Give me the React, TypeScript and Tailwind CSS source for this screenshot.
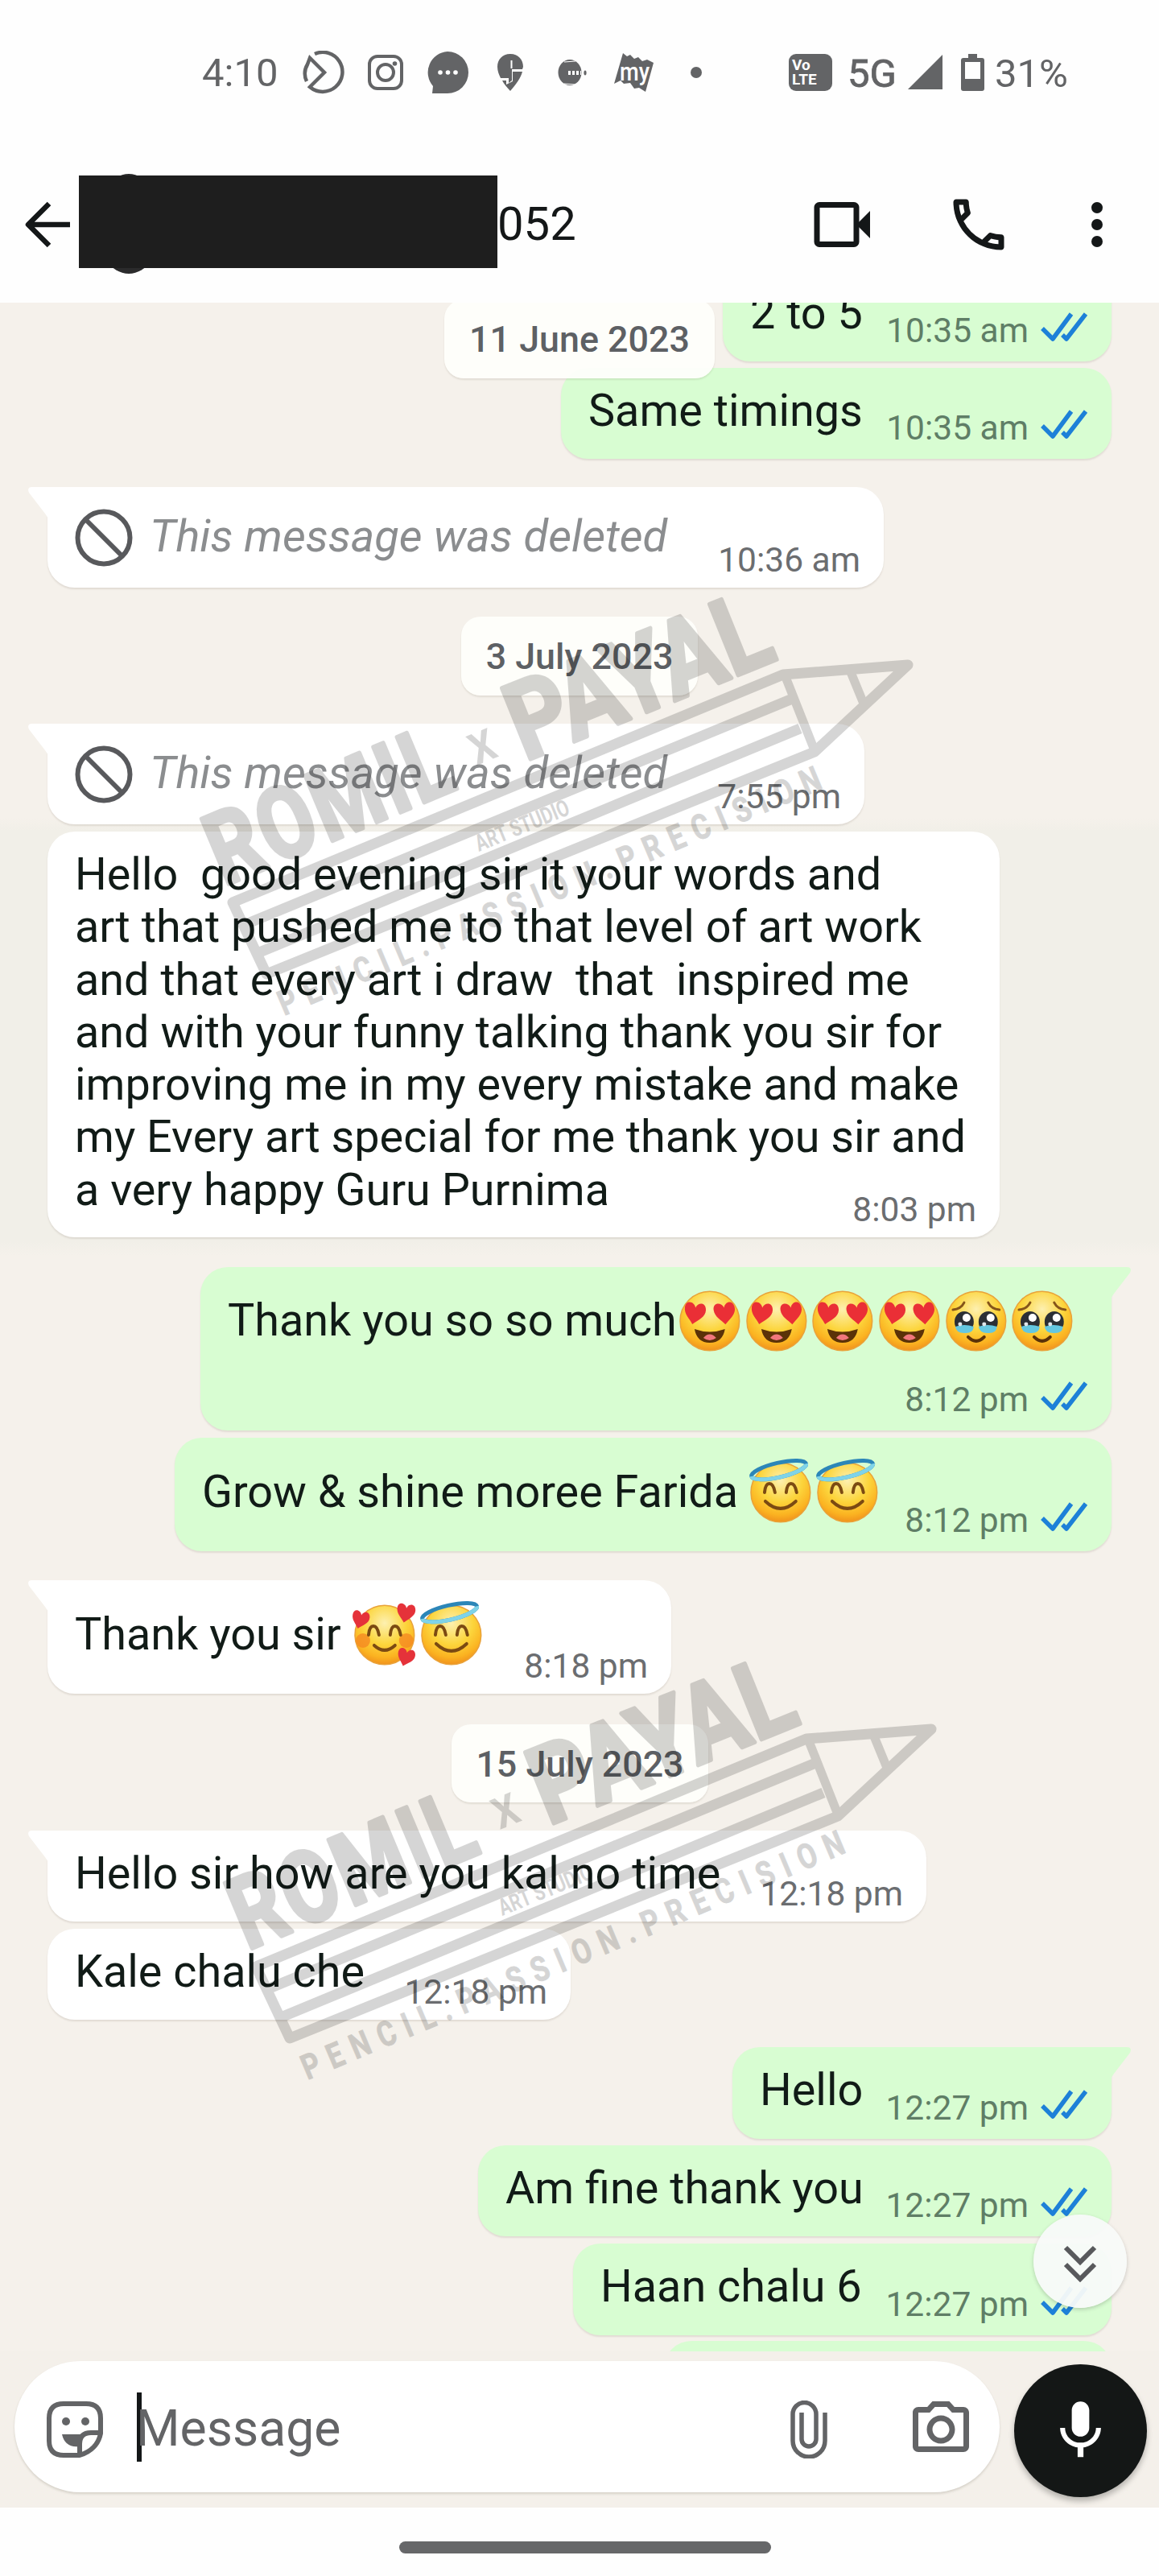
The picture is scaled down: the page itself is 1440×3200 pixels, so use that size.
import type { ReactNode } from 'react';
import clsx from 'clsx';
import { MdMic, MdOutlineCall, MdOutlinePhotoCamera } from 'react-icons/md';

/* ---------- Status bar ---------- */

function StatusBar() {
  return (
    <div className="flex h-[180px] items-center pl-[251px] text-[49px] leading-none text-[#636466]">
      <span className="mt-[1px] w-[124px]">4:10</span>
      <svg className="h-[54px] w-[53px] shrink-0" viewBox="0 0 53 54" fill="none" stroke="currentColor" strokeWidth="4.500">
        <path d="M16 4A24.500 24.500 0 1 1 10 45L28 27L10 9L7 17Q1 27 6 38" />
      </svg>
      <svg className="ml-[29px] h-[44px] w-[44px] shrink-0" viewBox="0 0 44 44" fill="none" stroke="currentColor" strokeWidth="4">
        <rect x="2" y="2" width="40" height="40" rx="10" />
        <circle cx="22" cy="22" r="10" />
        <circle cx="33.500" cy="11" r="2.800" fill="currentColor" stroke="none" />
      </svg>
      <svg className="ml-[29px] h-[54px] w-[53px] shrink-0" viewBox="0 0 53 54">
        <path d="M26 1a26 26 0 1 1 0 52H7l1-9A26 26 0 0 1 26 1z" fill="currentColor" />
        <circle cx="17" cy="27" r="2.800" fill="white" />
        <circle cx="26.500" cy="27" r="2.800" fill="white" />
        <circle cx="36" cy="27" r="2.800" fill="white" />
      </svg>
      <svg className="ml-[34px] h-[48px] w-[33px] shrink-0" viewBox="0 0 33 48">
        <path d="M17 1C7 1 1 8 1 17c0 5 2 10 4 14h10v6l4-3V20h13l1-3C33 8 27 1 17 1z" fill="currentColor" />
        <path d="M7 34h5v5l8-4V23h12c-2 8-8 16-15 24-4-4-8-9-10-13z" fill="currentColor" />
        <path d="M18.500 9v10" stroke="white" strokeWidth="2" />
      </svg>
      <svg className="ml-[43px] h-[36px] w-[36px] shrink-0" viewBox="0 0 36 36">
        <ellipse cx="15" cy="18" rx="14.500" ry="16" fill="currentColor" />
        <path d="M13 18.500h16" stroke="white" strokeWidth="5" strokeDasharray="3 2" />
        <path d="M8 5l14-1M8 32l14 1" stroke="white" strokeWidth="1.200" />
        <ellipse cx="34" cy="18.500" rx="1.600" ry="3" fill="currentColor" />
      </svg>
      <svg className="ml-[33px] h-[50px] w-[52px] shrink-0" viewBox="0 0 52 50">
        <path d="M12 1l5 4 4-2 5 5 5-2 5 5 6-2 8 4-10 36-8-5-6 1-5-7-8 1-4-4-8 4z" fill="currentColor" />
        <text x="8" y="35" fontSize="32" fontWeight="500" fill="white" textLength="37" lengthAdjust="spacingAndGlyphs">
          my
        </text>
      </svg>
      <span className="ml-[44px] h-[14px] w-[14px] shrink-0 rounded-full bg-current" />

      <span className="ml-[108px] flex h-[46px] w-[54px] shrink-0 flex-col justify-center rounded-[9px] bg-current pl-[4px]">
        <span className="text-[19px] font-bold leading-[18px] text-white">Vo</span>
        <span className="text-[19px] font-bold leading-[18px] text-white">LTE</span>
      </span>
      <span className="ml-[19px] mt-[2px] w-[75px] [-webkit-text-stroke:0.8px_#636466]">5G</span>
      <svg className="h-[44px] w-[44px] shrink-0" viewBox="0 0 44 44">
        <path d="M43 0v43H0z" fill="currentColor" />
      </svg>
      <svg className="ml-[22px] h-[46px] w-[29px] shrink-0" viewBox="0 0 29 46">
        <path d="M9 0h11v5h6q3 0 3 3v35q0 3-3 3H3q-3 0-3-3V8q0-3 3-3h6zM5 10v21h19V10z" fill="currentColor" fillRule="evenodd" />
      </svg>
      <span className="ml-[13px] mt-[2px]">31%</span>
    </div>
  );
}

/* ---------- Chat header ---------- */

function ChatHeader() {
  return (
    <div className="flex h-[196px] items-start pt-[38px]">
      <svg className="ml-[29px] mt-[31px] h-[60px] w-[59px] shrink-0" viewBox="0 0 59 60" fill="none" stroke="#141718" strokeWidth="6.500">
        <path d="M58 30H6M32 4L6 30l26 26" strokeLinejoin="round" />
      </svg>
      <div className="relative ml-[10px] h-[115px] w-[520px] shrink-0">
        <span className="absolute left-[20px] top-[-2px] h-[124px] w-[84px] rounded-[50%] bg-[#2b2b2c]" />
        <span className="absolute inset-0 bg-[#1e1e1e]" />
      </div>
      <span className="w-[392px] pt-[27px] text-[58px] leading-[66px] text-[#141718]">052</span>
      <svg className="mt-[31px] h-[60px] w-[74px] shrink-0" viewBox="0 0 74 60">
        <rect x="5" y="5.500" width="49" height="49" rx="3" fill="none" stroke="#141718" strokeWidth="7" />
        <path d="M54 30l17-17v34z" fill="#141718" />
      </svg>
      <MdOutlineCall className="ml-[90px] mt-[19px] h-[84px] w-[84px] shrink-0 text-[#141718]" />
      <div className="ml-[98px] mt-[33px] flex flex-col gap-[7px]">
        <span className="h-[14px] w-[14px] rounded-full bg-[#141718]" />
        <span className="h-[14px] w-[14px] rounded-full bg-[#141718]" />
        <span className="h-[14px] w-[14px] rounded-full bg-[#141718]" />
      </div>
    </div>
  );
}

/* ---------- Emoji ---------- */

type EmojiName = 'heartEyes' | 'tears' | 'halo' | 'hearts';

const HEART = 'M0 5C-2-2-12-3-12 6c0 8 7 12 11 18C4 19 13 14 12 6 11-3 2-2 0 5z';

function SmilingEyes() {
  return (
    <path
      d="M19 39q1-11 6-11t7 11M46 39q1-11 6-11t7 11"
      fill="none"
      stroke="#7b4a12"
      strokeWidth="4"
      strokeLinecap="round"
    />
  );
}

function Emoji({ name }: { name: EmojiName }) {
  return (
    <svg className="mr-[5px] h-[78px] w-[77.7px] shrink-0 overflow-visible" viewBox="0 0 78 78">
      <defs>
        <radialGradient id={`face-${name}`} cx="0.5" cy="0.3" r="0.72">
          <stop offset="0" stopColor="#fdf0b0" />
          <stop offset="0.5" stopColor="#fcd53c" />
          <stop offset="0.8" stopColor="#fbb321" />
          <stop offset="1" stopColor="#ef8d1c" />
        </radialGradient>
      </defs>
      <circle cx="39" cy="39" r="37" fill={`url(#face-${name})`} stroke="#e9a23a" strokeWidth="1.500" />

      {name === 'heartEyes' && (
        <>
          <path d={HEART} transform="translate(22 17) rotate(8) scale(1.1)" fill="#ea2f36" />
          <path d={HEART} transform="translate(56 17) rotate(-8) scale(1.1)" fill="#ea2f36" />
          <path d="M20 49q19 7 38 0-3 17-19 17T20 49z" fill="#5b3208" />
          <path d="M31 60q8-9 16 0-8 6-16 0z" fill="#f0777c" />
        </>
      )}

      {name === 'tears' && (
        <>
          <path d="M10 25q10-1 14-9M68 25q-10-1-14-9" fill="none" stroke="#85541a" strokeWidth="3" strokeLinecap="round" />
          <ellipse cx="24" cy="40" rx="12" ry="13" fill="#2b2f35" />
          <ellipse cx="54" cy="40" rx="12" ry="13" fill="#2b2f35" />
          <path d="M13 46q11-4 23 0-1 9-12 8-10 0-11-8zM42 46q11-4 23 0-1 9-12 8-10 0-11-8z" fill="#64c7e0" />
          <circle cx="27" cy="35" r="5" fill="#fff" />
          <circle cx="57" cy="35" r="5" fill="#fff" />
          <circle cx="19" cy="43" r="2.500" fill="#dfe6ea" />
          <circle cx="49" cy="43" r="2.500" fill="#dfe6ea" />
          <path d="M29 59q10 10 20 0" fill="none" stroke="#5b3208" strokeWidth="4" strokeLinecap="round" />
        </>
      )}

      {name === 'halo' && (
        <>
          <SmilingEyes />
          <path d="M20 50q19 18 38 0" fill="none" stroke="#7b4a12" strokeWidth="4" strokeLinecap="round" />
          <g transform="rotate(-13 37 12)" fill="none">
            <ellipse cx="37" cy="11" rx="35" ry="9" stroke="#2c86b8" strokeWidth="5" />
            <path d="M2 11c0 5 16 9 35 9s35-4 35-9" stroke="#7fd3e8" strokeWidth="5" />
          </g>
        </>
      )}

      {name === 'hearts' && (
        <>
          <circle cx="12" cy="46" r="9" fill="#f58a22" opacity="0.8" />
          <circle cx="66" cy="46" r="9" fill="#f58a22" opacity="0.8" />
          <SmilingEyes />
          <path d="M26 52q13 12 26 0" fill="none" stroke="#7b4a12" strokeWidth="4" strokeLinecap="round" />
          <path d={HEART} transform="translate(11 10) rotate(12) scale(.9)" fill="#e5323a" />
          <path d={HEART} transform="translate(67 1) rotate(8) scale(.95)" fill="#e5323a" />
          <path d={HEART} transform="translate(68 57) rotate(14) scale(.9)" fill="#e5323a" />
        </>
      )}
    </svg>
  );
}

/* ---------- Messages ---------- */

function DoubleTick() {
  return (
    <svg className="mb-[11px] ml-[15px] h-[38px] w-[59px] shrink-0" viewBox="0 0 59 38" fill="none" stroke="#1d80d8" strokeWidth="5.500">
      <path d="M2 21l13 13L38 3M27 29l5 5L56 3" strokeLinejoin="round" />
    </svg>
  );
}

interface BubbleProps {
  time?: string;
  /** Height, width and top margin of the bubble */
  size: string;
  sent?: boolean;
  tail?: boolean;
  pad?: string;
  children?: ReactNode;
}

function Bubble({ time, size, sent, tail, pad = 'pt-[21px]', children }: BubbleProps) {
  return (
    <div
      className={clsx(
        'relative flex shrink-0 items-start justify-between rounded-[34px] pl-[34px] pr-[29px] shadow-[0_2px_2px_rgba(90,80,60,0.13)]',
        sent ? 'self-end bg-[#d8fdd2]' : 'self-start bg-white',
        tail && (sent ? 'rounded-tr-none' : 'rounded-tl-none'),
        size,
        pad,
      )}
    >
      {tail && (
        <svg
          className={clsx('absolute top-0 h-[40px] w-[25px]', sent ? 'right-[-24px] -scale-x-100' : 'left-[-24px]')}
          viewBox="0 0 25 40"
          fill={sent ? '#d8fdd2' : '#ffffff'}
        >
          <path d="M25 0H5Q-2 0 1 7l20 26q3 4 4 7z" />
        </svg>
      )}
      <div className="flex whitespace-pre text-[55.75px] leading-[65.3px] text-[#111b17]">{children}</div>
      {time && (
        <div
          className={clsx(
            'flex items-end self-end whitespace-nowrap text-[42.5px] leading-[50px]',
            sent ? 'mb-[13px] text-[#5f7e66]' : 'mb-[9px] text-[#6b6d70]',
          )}
        >
          {time}
          {sent && <DoubleTick />}
        </div>
      )}
    </div>
  );
}

function DeletedBubble({ time, size }: { time: string; size: string }) {
  return (
    <Bubble time={time} size={size} tail pad="pt-[27px]">
      <svg className="h-[72px] w-[72px]" viewBox="0 0 72 72" fill="none" stroke="#58595c" strokeWidth="6">
        <circle cx="36" cy="36" r="32.500" />
        <path d="M13 13l46 46" />
      </svg>
      <span className="ml-[21px] mt-[2px] text-[56px] italic text-[#8b8d8f]">This message was deleted</span>
    </Bubble>
  );
}

function DateChip({ size, children }: { size: string; children: ReactNode }) {
  return (
    <div
      className={clsx(
        'flex shrink-0 justify-center rounded-[24px] bg-[#fefefb]/95 pt-[25px] text-[44.8px] font-medium leading-[50px] text-[#5d6064] shadow-[0_2px_2px_rgba(90,80,60,0.12)]',
        size,
      )}
    >
      {children}
    </div>
  );
}

const LONG_TEXT = [
  'Hello  good evening sir it your words and',
  'art that pushed me to that level of art work',
  'and that every art i draw  that  inspired me',
  'and with your funny talking thank you sir for',
  'improving me in my every mistake and make',
  'my Every art special for me thank you sir and',
  'a very happy Guru Purnima',
];

/* Studio stamp laid over the conversation */
function Watermark({ className }: { className: string }) {
  return (
    <svg
      className={clsx('pointer-events-none absolute h-[560px] w-[940px] overflow-visible opacity-[0.16]', className)}
      viewBox="220 730 940 560"
    >
      <g fill="none" stroke="black" strokeWidth="13" strokeLinejoin="round">
        <path d="M973 838L289 1121L331 1210L1012 934L1128 826z" />
        <path d="M308 1147L982 869M320 1184L994 905" />
        <path d="M976 841L1012 932M1057 835L1073 874" strokeWidth="11" />
      </g>
      <g fill="black" stroke="black" strokeLinejoin="round" fontWeight="700">
        <g transform="translate(278 1101) rotate(-22.7)">
          <text transform="scale(.8 1)" fontSize="124" strokeWidth="5" textLength="396">
            ROMIL
          </text>
        </g>
        <g transform="translate(652 946) rotate(-22)">
          <text transform="scale(.86 1)" fontSize="134" strokeWidth="5" textLength="396">
            PAYAL
          </text>
        </g>
        <text transform="translate(592 951) rotate(-22.3)" fontSize="54" strokeWidth="0" textLength="31" lengthAdjust="spacingAndGlyphs">
          X
        </text>
        <text transform="translate(595 1058) rotate(-22.3)" fontSize="29" strokeWidth="0" textLength="124" lengthAdjust="spacingAndGlyphs">
          ART STUDIO
        </text>
        <g transform="translate(353 1262) rotate(-22.9)">
          <text transform="scale(.8 1)" fontSize="43" strokeWidth="1" textLength="910">
            PENCIL.PASSION.PRECISION
          </text>
        </g>
      </g>
    </svg>
  );
}

function Conversation() {
  return (
    <div className="relative flex h-[2545px] flex-col overflow-hidden bg-[linear-gradient(to_bottom,#f5f1eb_640px,#f1efe8_656px,#f1efe8_1166px,#f5f1eb_1184px)] pl-[59px] pr-[59px]">
      <Bubble sent time="10:35 am" size="-mt-[40px] h-[113px] w-[483px]">2 to 5</Bubble>
      <Bubble sent time="10:35 am" size="mt-[8px] h-[113px] w-[684px]">Same timings</Bubble>
      <DeletedBubble time="10:36 am" size="mt-[35px] h-[125px] w-[1039px]" />
      <DateChip size="mt-[36px] ml-[514px] h-[98px] w-[294px]">3 July 2023</DateChip>
      <DeletedBubble time="7:55 pm" size="mt-[35px] h-[125px] w-[1015px]" />
      <Bubble time="8:03 pm" size="mt-[9px] h-[504px] w-[1183px]">
        <div className="flex w-[960px] flex-col">
          {LONG_TEXT.map((line) => (
            <span key={line}>{line}</span>
          ))}
        </div>
      </Bubble>

      <Bubble sent tail time="8:12 pm" size="mt-[37px] h-[203px] w-[1132px]" pad="pt-[34px]">
        <span className="w-[560px]">Thank you so so much</span>
        <span className="-mt-[6px] flex w-[240px]">
          <Emoji name="heartEyes" />
          <Emoji name="heartEyes" />
          <Emoji name="heartEyes" />
          <Emoji name="heartEyes" />
          <Emoji name="tears" />
          <Emoji name="tears" />
        </span>
      </Bubble>
      <Bubble sent time="8:12 pm" size="mt-[9px] h-[141px] w-[1164px]" pad="pt-[35px]">
        <span className="w-[680px]">Grow &amp; shine moree Farida</span>
        <span className="-mt-[6px] flex">
          <Emoji name="halo" />
          <Emoji name="halo" />
        </span>
      </Bubble>

      <Bubble tail time="8:18 pm" size="mt-[36px] h-[141px] w-[775px]" pad="pt-[35px]">
        <span className="w-[346px]">Thank you sir</span>
        <span className="-mt-[6px] flex">
          <Emoji name="hearts" />
          <Emoji name="halo" />
        </span>
      </Bubble>
      <DateChip size="mt-[38px] ml-[502px] h-[97px] w-[319px]">15 July 2023</DateChip>
      <Bubble tail time="12:18 pm" size="mt-[35px] h-[113px] w-[1092px]">Hello sir how are you kal no time</Bubble>
      <Bubble time="12:18 pm" size="mt-[9px] h-[113px] w-[650px]">Kale chalu che</Bubble>

      <Bubble sent tail time="12:27 pm" size="mt-[34px] h-[114px] w-[471px]">Hello</Bubble>
      <Bubble sent time="12:27 pm" size="mt-[8px] h-[113px] w-[787px]">Am fine thank you</Bubble>
      <Bubble sent time="12:27 pm" size="mt-[9px] h-[114px] w-[669px]">Haan chalu 6</Bubble>
      <Bubble sent size="mt-[7px] h-[113px] w-[556px]" />

      {/* Floating date of the first visible message */}
      <div className="absolute left-[552px] top-[-4px]">
        <DateChip size="h-[98px] w-[336px]">11 June 2023</DateChip>
      </div>

      <Watermark className="left-[220px] top-[354px]" />
      <Watermark className="left-[249px] top-[1676px]" />

      {/* Scroll to bottom */}
      <div className="absolute left-[1284px] top-[2375px] flex h-[116px] w-[116px] items-center justify-center rounded-full bg-[#f8faf9]/95 shadow-[0_2px_5px_rgba(0,0,0,0.18)]">
        <svg className="mt-[6px] h-[46px] w-[42px]" viewBox="0 0 42 46" fill="none" stroke="#58595c" strokeWidth="6">
          <path d="M3 3l18 18L39 3M3 24l18 18 18-18" />
        </svg>
      </div>
    </div>
  );
}

/* ---------- Composer ---------- */

function Composer() {
  return (
    <div className="flex h-[194px] items-start bg-[#f4f0ea] pl-[18px] pt-[12px]">
      <div className="flex h-[163px] w-[1224px] items-center rounded-full bg-white pl-[39px] text-[#636466] shadow-[0_2px_3px_rgba(80,70,50,0.18)]">
        <svg className="mt-[7px] h-[72px] w-[72px] shrink-0" viewBox="0 0 72 72" fill="none" stroke="currentColor" strokeWidth="6">
          <path d="M22 4h28q18 0 18 18v19q-4 20-26 27H22Q4 68 4 50V22Q4 4 22 4z" strokeLinejoin="round" />
          <path d="M68 40H56q-14 0-14 14v14" />
          <path d="M20 42h29q-8 5-8 15-17 2-21-15z" fill="currentColor" stroke="none" />
          <circle cx="25" cy="26" r="5" fill="currentColor" stroke="none" />
          <circle cx="49" cy="26" r="5" fill="currentColor" stroke="none" />
        </svg>
        <span className="ml-[41px] h-[86px] w-[6px] shrink-0 bg-[#141718]" />
        <span className="-ml-[7px] mt-[5px] w-[813px] text-[62.5px] leading-[72px]">Message</span>
        <svg className="mt-[6px] h-[72px] w-[46px] shrink-0" viewBox="0 0 46 72" fill="none" stroke="currentColor" strokeWidth="5.500">
          <path d="M43 15v35a20 20 0 0 1-40 0V17a14 14 0 0 1 29 0v31a9 9 0 0 1-18 0V15" />
        </svg>
        <MdOutlinePhotoCamera className="ml-[99px] mt-[7px] h-[84px] w-[84px] shrink-0" />
      </div>
      <div className="ml-[18px] mt-[4px] flex h-[165px] w-[165px] items-center justify-center rounded-full bg-[#141716] shadow-[0_5px_7px_rgba(0,0,0,0.25)]">
        <MdMic className="h-[87px] w-[87px] text-white" />
      </div>
    </div>
  );
}

export default function App() {
  return (
    <div className="h-[3200px] w-[1440px] overflow-hidden bg-[#fefefe] font-['Roboto',sans-serif]">
      <StatusBar />
      <ChatHeader />
      <Conversation />
      <Composer />
      <div className="flex pl-[496px] pt-[42px]">
        <span className="h-[15px] w-[462px] rounded-full bg-[#666769]" />
      </div>
    </div>
  );
}
